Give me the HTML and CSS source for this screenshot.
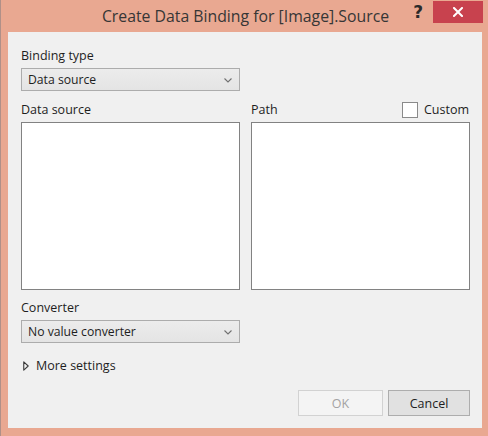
FILE: index.html
```html
<!DOCTYPE html>
<html lang="en">
<head>
<meta charset="utf-8">
<title>Create Data Binding</title>
<link rel="stylesheet" href="styles.css">
</head>
<body>
<div class="window">
  <header class="titlebar">
    <span class="filler"></span>
    <h1 class="title">Create Data Binding for [Image].Source</h1>
    <div class="controls">
      <span class="help">?</span>
      <button class="close" aria-label="Close">
        <svg width="10" height="10" viewBox="0 0 10 10"><path d="M1 1 L9 9 M9 1 L1 9" stroke="#fff" stroke-width="2" stroke-linecap="square"/></svg>
      </button>
    </div>
  </header>
  <main class="panel">
    <div class="label">Binding type</div>
    <div class="select">
      <span>Data source</span>
      <svg class="chev" width="8" height="5" viewBox="0 0 8 5"><path d="M0.5 0.5 L4 4 L7.5 0.5" fill="none" stroke="#707070" stroke-width="1.1"/></svg>
    </div>
    <div class="lists">
      <div class="col">
        <div class="label">Data source</div>
        <div class="listbox"></div>
      </div>
      <div class="col">
        <div class="label-row">
          <span class="label">Path</span>
          <span class="check"><span class="box"></span><span>Custom</span></span>
        </div>
        <div class="listbox"></div>
      </div>
    </div>
    <div class="label conv-label">Converter</div>
    <div class="select">
      <span>No value converter</span>
      <svg class="chev" width="8" height="5" viewBox="0 0 8 5"><path d="M0.5 0.5 L4 4 L7.5 0.5" fill="none" stroke="#707070" stroke-width="1.1"/></svg>
    </div>
    <div class="more">
      <svg width="6" height="10" viewBox="0 0 6 10"><path d="M0.75 0.9 L5.2 5 L0.75 9.1 Z" fill="#f4f4f4" stroke="#3a3a3a" stroke-width="1.1" stroke-linejoin="round"/></svg>
      <span>More settings</span>
    </div>
    <div class="buttons">
      <button class="btn" disabled>OK</button>
      <button class="btn">Cancel</button>
    </div>
  </main>
</div>
</body>
</html>
```

FILE: styles.css
```css
* { box-sizing: border-box; }
html, body { margin: 0; padding: 0; }
body {
  background: #e9a891;
  font-family: "Open Sans", "Noto Sans", sans-serif;
  color: #1e1e1e;
}
.window {
  width: 488px;
  height: 436px;
  background: #e9a891;
  border-left: 1px solid #b09088;
  display: flex;
  flex-direction: column;
}
.titlebar {
  height: 32px;
  display: grid;
  grid-template-columns: 1fr auto 1fr;
  align-items: start;
}
.title {
  margin: 0;
  font-weight: normal;
  font-size: 15.8px;
  line-height: 20px;
  padding-top: 6px;
  color: #363636;
  white-space: nowrap;
  padding-left: 2px;
}
.controls {
  justify-self: end;
  display: flex;
  align-items: flex-start;
}
.help {
  font-family: "DejaVu Sans", sans-serif;
  font-weight: bold;
  font-size: 17px;
  line-height: 17px;
  color: #2a2a2a;
  margin-top: 4px;
  margin-right: 10px;
}
.close {
  width: 50px;
  height: 22px;
  margin-top: 1px;
  margin-right: 5px;
  border: none;
  padding: 0;
  background: #c8424e;
  display: flex;
  align-items: center;
  justify-content: center;
}
.panel {
  margin: 0 6px 0 7px;
  height: 396px;
  background: #f0f0f0;
  padding: 16px 12px 12px 13px;
  display: flex;
  flex-direction: column;
}
.label {
  font-size: 12.5px;
  line-height: 16px;
  color: #1e1e1e;
}
.select {
  margin-top: 4px;
  width: 219px;
  height: 23px;
  border: 1px solid #acacac;
  background: linear-gradient(#ececec, #e4e4e4);
  display: flex;
  align-items: center;
  justify-content: space-between;
  padding: 0 7px 0 6px;
  font-size: 12.2px;
  color: #1e1e1e;
}
.chev { margin-top: 1px; }
.lists {
  margin-top: 11px;
  display: grid;
  grid-template-columns: 219px 219px;
  column-gap: 11px;
}
.col { display: flex; flex-direction: column; }
.label-row {
  display: flex;
  justify-content: space-between;
  align-items: center;
  height: 16px;
}
.check {
  display: flex;
  align-items: center;
  gap: 6px;
  font-size: 12.5px;
  line-height: 16px;
  margin-right: 1px;
}
.box {
  width: 16px;
  height: 16px;
  border: 1px solid #8a8a8a;
  background: #fff;
}
.listbox {
  margin-top: 4px;
  height: 168px;
  background: #fff;
  border: 1px solid #828282;
}
.conv-label { margin-top: 10px; }
.more {
  margin-top: 14px;
  display: flex;
  align-items: center;
  gap: 7px;
  padding-left: 2px;
  font-size: 12.5px;
  line-height: 18px;
  color: #1e1e1e;
}
.buttons {
  margin-top: auto;
  display: flex;
  justify-content: flex-end;
  gap: 5px;
}
.btn {
  width: 85px;
  height: 26px;
  font-family: "Open Sans", "Noto Sans", sans-serif;
  font-size: 12.5px;
  color: #1e1e1e;
  background: #e1e1e1;
  border: 1px solid #adadad;
  padding: 0;
}
.btn + .btn { width: 82px; }
.btn:disabled {
  background: #f4f4f4;
  border-color: #d2d2d2;
  color: #a3a3a3;
}
```
